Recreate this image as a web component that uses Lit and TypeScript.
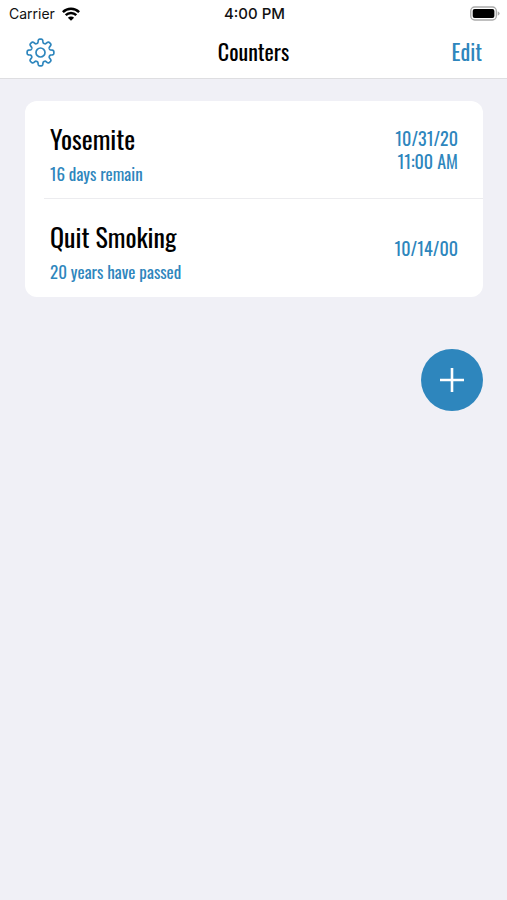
import { LitElement, html, css, svg } from "lit";
import { customElement, state } from "lit/decorators.js";

interface Counter {
  title: string;
  status: string;
  date: string;
  time?: string;
}

/** Closed outline of a cog with softly rounded teeth, centred on 0,0. */
function cogOutline(teeth: number, radius: number, depth: number): string {
  const steps = teeth * 24;
  const points: string[] = [];
  for (let i = 0; i < steps; i++) {
    const angle = (i / steps) * Math.PI * 2;
    const wave = Math.tanh(2.2 * (Math.cos(teeth * angle) + 0.1));
    const r = radius + depth * wave;
    points.push(`${(r * Math.cos(angle)).toFixed(2)} ${(r * Math.sin(angle)).toFixed(2)}`);
  }
  return `M${points.join("L")}Z`;
}

const cog = svg`
  <g fill="none" stroke="currentColor" stroke-width="1.7" stroke-linejoin="round">
    <path d=${cogOutline(8, 11.5, 1.9)}></path>
    <circle r="4.5"></circle>
  </g>`;

@customElement("status-bar")
export class StatusBar extends LitElement {
  static styles = css`
    :host {
      display: grid;
      grid-template-columns: 1fr auto 1fr;
      align-items: center;
      height: 27px;
      padding: 0 7px 0 9px;
      font: 14px/27px Inter, "Liberation Sans", sans-serif;
      color: #111;
    }
    .carrier { display: flex; align-items: center; gap: 6px; }
    .clock { font-size: 15px; font-weight: 500; }
    .battery { justify-self: end; }
    svg { display: block; }
  `;

  render() {
    return html`
      <div class="carrier">
        <span>Carrier</span>
        <svg width="20" height="14" viewBox="0 0 18 14" aria-label="Wi-Fi">
          <g fill="none" stroke="#000" stroke-width="2.5">
            <path d="M0.9 5.1A11.6 11.6 0 0 1 17.1 5.1"></path>
            <path d="M3.7 8.2A7.6 7.6 0 0 1 14.3 8.2"></path>
          </g>
          <path d="M9 13.8L5.9 10.7A4.4 4.4 0 0 1 12.1 10.7Z"></path>
        </svg>
      </div>
      <span class="clock">4:00 PM</span>
      <svg class="battery" width="30" height="15" viewBox="0 0 31 15" aria-label="Battery full">
        <rect x="0.8" y="0.8" width="26.4" height="13.4" rx="4" fill="#fff" stroke="#aaa" stroke-width="1.4"></rect>
        <rect x="2.8" y="2.8" width="22.4" height="9.4" rx="2" fill="#000"></rect>
        <path d="M28.6 5.2Q30.6 6 30.6 7.5T28.6 9.8Z" fill="#aaa"></path>
      </svg>
    `;
  }
}

@customElement("app-root")
export class AppRoot extends LitElement {
  @state() private counters: Counter[] = [
    { title: "Yosemite", status: "16 days remain", date: "10/31/20", time: "11:00 AM" },
    { title: "Quit Smoking", status: "20 years have passed", date: "10/14/00" },
  ];

  static styles = css`
    :host {
      --accent: #2e86bd;
      display: block;
      min-height: 100vh;
      background: #f0f0f6;
      color: #000;
      font-family: Oswald, "Roboto Condensed", "Liberation Sans", sans-serif;
      font-weight: 400;
    }
    * { box-sizing: border-box; }
    button {
      padding: 0;
      border: 0;
      background: none;
      color: var(--accent);
      font: inherit;
      cursor: pointer;
    }
    svg { display: block; }
    header { background: #fff; border-bottom: 1px solid #dedee1; }
    nav {
      display: grid;
      grid-template-columns: 1fr auto 1fr;
      align-items: center;
      height: 51px;
      padding: 0 25px 4px;
    }
    h1 { margin: 0; font-size: 22px; line-height: 32px; font-weight: 400; }
    .settings { justify-self: start; padding-top: 4px; }
    .edit { justify-self: end; font-size: 22px; line-height: 32px; }
    main {
      display: flex;
      flex-direction: column;
      gap: 52px;
      padding: 22px 24px 22px 25px;
    }
    .list {
      margin: 0;
      padding: 0;
      list-style: none;
      background: #fff;
      border-radius: 12px;
    }
    .row {
      display: flex;
      align-items: center;
      justify-content: space-between;
      height: 98px;
      margin-left: 19px;
      padding: 0 25px 0 6px;
    }
    .row:not(:last-child) { border-bottom: 1px solid #ececef; }
    .about { padding-top: 8px; }
    h2 { margin: 0; font-size: 26px; line-height: 40px; font-weight: 400; }
    .status, .when {
      margin: 0;
      color: var(--accent);
    }
    .status { font-size: 17px; line-height: 30px; }
    .when { font-size: 18px; line-height: 23px; text-align: right; }
    .when span { display: block; }
    .add {
      display: grid;
      place-items: center;
      align-self: flex-end;
      width: 62px;
      height: 62px;
      border-radius: 50%;
      background: var(--accent);
      color: #fff;
    }
  `;

  render() {
    return html`
      <header>
        <status-bar></status-bar>
        <nav>
          <button class="settings" aria-label="Settings">
            <svg width="31" height="31" viewBox="-15.5 -15.5 31 31">${cog}</svg>
          </button>
          <h1>Counters</h1>
          <button class="edit">Edit</button>
        </nav>
      </header>
      <main>
        <ul class="list">
          ${this.counters.map(
            (c) => html`
              <li class="row">
                <div class="about">
                  <h2>${c.title}</h2>
                  <p class="status">${c.status}</p>
                </div>
                <p class="when">
                  <span>${c.date}</span>
                  ${c.time ? html`<span>${c.time}</span>` : null}
                </p>
              </li>
            `
          )}
        </ul>
        <button class="add" aria-label="Add counter">
          <svg width="26" height="26" viewBox="0 0 26 26">
            <path d="M13 1V25M1 13H25" stroke="currentColor" stroke-width="2.6"></path>
          </svg>
        </button>
      </main>
    `;
  }
}
